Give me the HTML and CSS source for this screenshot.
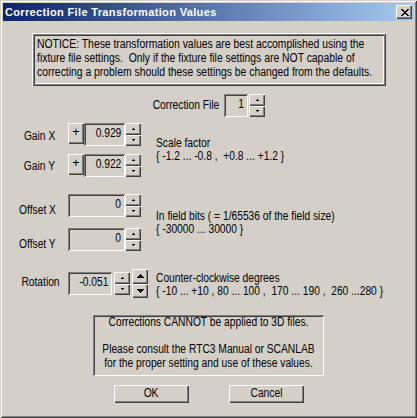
FILE: index.html
```html
<!DOCTYPE html>
<html>
<head>
<meta charset="utf-8">
<link rel="stylesheet" href="styles.css">
</head>
<body>
<div class="window">
  <div class="titlebar">
    <span class="title">Correction File Transformation Values</span>
    <div class="close">
      <svg width="8" height="7" viewBox="0 0 8 7" shape-rendering="crispEdges">
        <rect x="0" y="0" width="2" height="1"/><rect x="6" y="0" width="2" height="1"/>
        <rect x="1" y="1" width="2" height="1"/><rect x="5" y="1" width="2" height="1"/>
        <rect x="2" y="2" width="4" height="1"/>
        <rect x="3" y="3" width="2" height="1"/>
        <rect x="2" y="4" width="4" height="1"/>
        <rect x="1" y="5" width="2" height="1"/><rect x="5" y="5" width="2" height="1"/>
        <rect x="0" y="6" width="2" height="1"/><rect x="6" y="6" width="2" height="1"/>
      </svg>
    </div>
  </div>
  <div class="content">
    <div class="notice"><div class="notice-text">NOTICE: These transformation values are best accomplished using the<br>fixture file settings.&nbsp; Only if the fixture file settings are NOT capable of<br>correcting a problem should these settings be changed from the defaults.</div></div>

    <div class="cf-row">
      <div class="cf-label"><span class="nx nx-r">Correction File</span></div>
      <div class="field cf-field"><span class="nx nx-r">1</span></div>
      <div class="spin">
        <div class="sbtn"><svg width="3" height="2" shape-rendering="crispEdges"><rect x="1" y="0" width="1" height="1"/><rect x="0" y="1" width="3" height="1"/></svg></div>
        <div class="sbtn"><svg width="3" height="2" shape-rendering="crispEdges"><rect x="0" y="0" width="3" height="1"/><rect x="1" y="1" width="1" height="1"/></svg></div>
      </div>
    </div>

    <div class="group gain">
      <div class="label lab-gx"><span class="nx nx-r">Gain X</span></div>
      <div class="ctrl">
        <div class="plus">+</div>
        <div class="field gain-field"><span class="nx nx-r">0.929</span></div>
        <div class="spin">
          <div class="sbtn"><svg width="3" height="2" shape-rendering="crispEdges"><rect x="1" y="0" width="1" height="1"/><rect x="0" y="1" width="3" height="1"/></svg></div>
          <div class="sbtn"><svg width="3" height="2" shape-rendering="crispEdges"><rect x="0" y="0" width="3" height="1"/><rect x="1" y="1" width="1" height="1"/></svg></div>
        </div>
      </div>
      <div class="desc">Scale factor<br>{ -1.2 ... -0.8 ,&nbsp; +0.8 ... +1.2 }</div>
      <div class="label lab-gy"><span class="nx nx-r">Gain Y</span></div>
      <div class="ctrl">
        <div class="plus">+</div>
        <div class="field gain-field"><span class="nx nx-r">0.922</span></div>
        <div class="spin">
          <div class="sbtn"><svg width="3" height="2" shape-rendering="crispEdges"><rect x="1" y="0" width="1" height="1"/><rect x="0" y="1" width="3" height="1"/></svg></div>
          <div class="sbtn"><svg width="3" height="2" shape-rendering="crispEdges"><rect x="0" y="0" width="3" height="1"/><rect x="1" y="1" width="1" height="1"/></svg></div>
        </div>
      </div>
    </div>

    <div class="group offset">
      <div class="label lab-ox"><span class="nx nx-r">Offset X</span></div>
      <div class="ctrl">
        <div class="field off-field"><span class="nx nx-r">0</span></div>
        <div class="spin">
          <div class="sbtn"><svg width="3" height="2" shape-rendering="crispEdges"><rect x="1" y="0" width="1" height="1"/><rect x="0" y="1" width="3" height="1"/></svg></div>
          <div class="sbtn"><svg width="3" height="2" shape-rendering="crispEdges"><rect x="0" y="0" width="3" height="1"/><rect x="1" y="1" width="1" height="1"/></svg></div>
        </div>
      </div>
      <div class="desc">In field bits ( = 1/65536 of the field size)<br>{ -30000 ... 30000 }</div>
      <div class="label lab-oy"><span class="nx nx-r">Offset Y</span></div>
      <div class="ctrl">
        <div class="field off-field"><span class="nx nx-r">0</span></div>
        <div class="spin">
          <div class="sbtn"><svg width="3" height="2" shape-rendering="crispEdges"><rect x="1" y="0" width="1" height="1"/><rect x="0" y="1" width="3" height="1"/></svg></div>
          <div class="sbtn"><svg width="3" height="2" shape-rendering="crispEdges"><rect x="0" y="0" width="3" height="1"/><rect x="1" y="1" width="1" height="1"/></svg></div>
        </div>
      </div>
    </div>

    <div class="group rotation">
      <div class="label lab-rot"><span class="nx nx-r">Rotation</span></div>
      <div class="ctrl rot-ctrl">
        <div class="field rot-field"><span class="nx nx-r">-0.051</span></div>
        <div class="spin">
          <div class="sbtn"><svg width="3" height="2" shape-rendering="crispEdges"><rect x="1" y="0" width="1" height="1"/><rect x="0" y="1" width="3" height="1"/></svg></div>
          <div class="sbtn"><svg width="3" height="2" shape-rendering="crispEdges"><rect x="0" y="0" width="3" height="1"/><rect x="1" y="1" width="1" height="1"/></svg></div>
        </div>
        <div class="spin big">
          <div class="sbtn"><svg width="7" height="4" shape-rendering="crispEdges"><rect x="3" y="0" width="1" height="1"/><rect x="2" y="1" width="3" height="1"/><rect x="1" y="2" width="5" height="1"/><rect x="0" y="3" width="7" height="1"/></svg></div>
          <div class="sbtn"><svg width="7" height="4" shape-rendering="crispEdges"><rect x="0" y="0" width="7" height="1"/><rect x="1" y="1" width="5" height="1"/><rect x="2" y="2" width="3" height="1"/><rect x="3" y="3" width="1" height="1"/></svg></div>
        </div>
      </div>
      <div class="desc">Counter-clockwise degrees<br>{ -10 ... +10 , 80 ... 100 ,&nbsp; 170 ... 190 ,&nbsp; 260 ...280 }</div>
    </div>

    <div class="info"><div class="info-text">Corrections CANNOT be applied to 3D files.<br><br>Please consult the RTC3 Manual or SCANLAB<br>for the proper setting and use of these values.</div></div>

    <div class="buttons">
      <div class="btn"><span class="nx nx-c">OK</span></div>
      <div class="btn"><span class="nx nx-c">Cancel</span></div>
    </div>
  </div>
</div>
</body>
</html>
```

FILE: styles.css
```css
html, body {
  margin: 0;
  padding: 0;
  background: #d4d0c8;
  overflow: hidden;
}

.window {
  width: 417px;
  height: 418px;
  box-sizing: border-box;
  padding: 3px;
  background: #d4d0c8;
  box-shadow: inset 1px 1px #d4d0c8, inset -1px -1px #404040, inset 2px 2px #ffffff, inset -2px -2px #808080;
  display: flex;
  flex-direction: column;
  font-family: "Liberation Sans", "Arial", sans-serif;
  font-size: 12.5px;
  color: #000;
  overflow: hidden;
}

/* narrow text: the reference uses a condensed face */
.nx {
  display: inline-block;
  transform: scaleX(0.82);
  white-space: nowrap;
}

.nx-r { transform-origin: right center; }
.nx-c { transform-origin: center center; }

.titlebar {
  height: 18px;
  flex: none;
  display: flex;
  align-items: center;
  justify-content: space-between;
  padding: 0 2px 0 2px;
  background: linear-gradient(to right, #0a246a, #a6caf0);
}

.title {
  color: #fff;
  font-family: "Liberation Sans", sans-serif;
  font-weight: bold;
  font-size: 11px;
  letter-spacing: 0.35px;
  white-space: nowrap;
}

.close {
  width: 16px;
  height: 14px;
  box-sizing: border-box;
  background: #d4d0c8;
  box-shadow: inset 1px 1px #ffffff, inset -1px -1px #404040, inset -2px -2px #808080;
  display: flex;
  align-items: center;
  justify-content: center;
  padding-left: 1px;
}

.content {
  flex: 1;
  display: flex;
  flex-direction: column;
  align-items: center;
}

.notice {
  margin-top: 12px;
  width: 354px;
  height: 53px;
  box-sizing: border-box;
  padding: 4px 2px 0 5px;
  line-height: 14px;
  box-shadow: inset 1px 1px #ffffff, inset -1px -1px #404040, inset 2px 2px #808080, inset -2px -2px #808080, inset 3px 3px #404040, inset -3px -3px #ffffff;
}

.notice-text {
  white-space: nowrap;
  transform: scaleX(0.83);
  transform-origin: left top;
}

.cf-row {
  margin-top: 8px;
  display: flex;
  align-items: flex-start;
}

.cf-label {
  width: 67px;
  margin-top: 5px;
  line-height: 13px;
  margin-right: 5px;
  display: flex;
  justify-content: flex-end;
}

.field {
  height: 23px;
  box-sizing: border-box;
  padding: 3px 4px 0 3px;
  line-height: 15px;
  text-align: right;
  background: #d4d0c8;
  box-shadow: inset 1px 1px #808080, inset -1px -1px #ffffff, inset 2px 2px #404040, inset -2px -2px #d4d0c8;
}

.cf-field {
  width: 24px;
  margin-right: 1px;
}

.spin {
  display: flex;
  flex-direction: column;
  width: 16px;
}

.sbtn {
  height: 12px;
  box-sizing: border-box;
  background: #d4d0c8;
  box-shadow: inset 1px 1px #ffffff, inset -1px -1px #404040, inset -2px -2px #808080;
  display: flex;
  align-items: center;
  justify-content: center;
  padding-bottom: 1px;
}

.sbtn + .sbtn {
  height: 11px;
}

.spin.big .sbtn {
  height: 15px;
}

.spin.big .sbtn + .sbtn {
  height: 14px;
}

.group {
  align-self: stretch;
  display: grid;
  grid-template-columns: 65px 80px minmax(0, 1fr);
}

.ctrl {
  display: flex;
  align-items: flex-start;
}

.desc {
  grid-column: 3;
  grid-row: 1 / span 2;
  align-self: center;
  margin-left: 8px;
  line-height: 13px;
  white-space: nowrap;
  transform: scaleX(0.82);
  transform-origin: left center;
}

.gain {
  margin-top: 6px;
  row-gap: 8px;
}

.offset {
  margin-top: 17px;
  row-gap: 11px;
}

.rotation {
  margin-top: 21px;
}

.rotation .desc {
  grid-row: 1;
}

.label {
  text-align: right;
  line-height: 13px;
  white-space: nowrap;
}

.lab-gx { padding-top: 7px; padding-right: 13px; }
.lab-gy { padding-top: 6px; padding-right: 13px; }
.lab-ox { padding-top: 10px; padding-right: 12px; }
.lab-oy { padding-top: 10px; padding-right: 12px; }
.lab-rot { padding-top: 4px; padding-right: 8px; }

.plus {
  width: 16px;
  height: 21px;
  box-sizing: border-box;
  text-align: center;
  line-height: 19px;
  background: #d4d0c8;
  box-shadow: inset 1px 1px #ffffff, inset -1px -1px #404040, inset -2px -2px #808080;
}

.gain-field {
  width: 41px;
}

.off-field {
  width: 57px;
}

.rot-ctrl {
  align-items: center;
  height: 23px;
}

.rot-field {
  width: 44px;
  margin-right: 2px;
}

.spin.big {
  margin-left: 2px;
}

.info {
  margin-top: 17px;
  width: 231px;
  height: 61px;
  box-sizing: border-box;
  padding-top: 1px;
  display: flex;
  flex-direction: column;
  align-items: center;
  line-height: 13.5px;
  box-shadow: inset 1px 1px #808080, inset -1px -1px #ffffff, inset 2px 2px #404040, inset -2px -2px #d4d0c8;
}

.info-text {
  flex: none;
  width: max-content;
  text-align: center;
  white-space: nowrap;
  transform: scaleX(0.82);
  transform-origin: center top;
}

.buttons {
  margin-top: 9px;
  display: flex;
  gap: 40px;
}

.btn {
  width: 75px;
  height: 18px;
  box-sizing: border-box;
  text-align: center;
  line-height: 17px;
  background: #d4d0c8;
  box-shadow: inset 1px 1px #ffffff, inset -1px -1px #404040, inset -2px -2px #808080;
}
```
